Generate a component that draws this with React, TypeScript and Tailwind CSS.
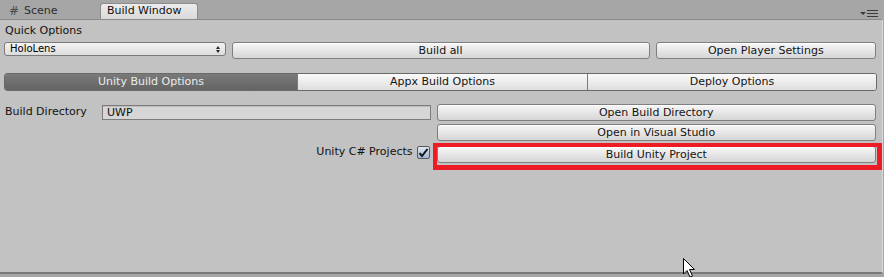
import React from "react";

const font = { fontFamily: '"DejaVu Sans", Verdana, sans-serif' };

function Btn({ label, className = "" }: { label: string; className?: string }) {
  return (
    <div
      className={
        "flex h-[17px] items-center justify-center rounded-[3px] border border-[#7f7f7f] bg-gradient-to-b from-[#f7f7f7] to-[#d6d6d6] text-[11px] leading-none text-[#141414] shadow-[inset_0_1px_0_#ffffff] " +
        className
      }
    >
      {label}
    </div>
  );
}

export default function App() {
  return (
    <div
      className="relative h-[277px] w-[884px] overflow-hidden bg-[#a6a6a6] text-[#111]"
      style={font}
    >
      {/* tab bar */}
      <div className="relative flex h-[19px] items-end pl-[4px]">
        <div className="flex h-[16px] w-[96px] items-center gap-[5px] pl-[5px] text-[11px] text-[#2e2e2e]">
          <span className="text-[12px] leading-none text-[#4a4a4a]">#</span>
          <span>Scene</span>
        </div>
        <div className="flex h-[16px] w-[98px] items-center rounded-t-[3px] border border-b-0 border-[#8c8c8c] bg-gradient-to-b from-[#ececec] to-[#d9d9d9] pl-[6px] text-[11px] text-[#111]">
          Build Window
        </div>
        <div className="absolute right-[6px] top-[10px] flex items-center gap-[1px]">
          <span className="block h-0 w-0 border-x-[3px] border-t-[3px] border-x-transparent border-t-[#3a3a3a]" />
          <div className="flex flex-col gap-[2px]">
            <span className="block h-[1px] w-[11px] bg-[#3a3a3a]" />
            <span className="block h-[1px] w-[11px] bg-[#3a3a3a]" />
            <span className="block h-[1px] w-[11px] bg-[#3a3a3a]" />
          </div>
        </div>
      </div>

      {/* panel */}
      <div className="relative h-[255px] w-[883px] border-t border-r border-b-2 border-[#8a8a8a] border-r-[#d8d8d8] border-b-[#7a7a7a] bg-[#c2c2c2] pl-[4px] pr-[6px]">
        <div className="flex h-[21px] items-center pl-[1px] pt-[1px] text-[11px]">Quick Options</div>
        <div className="mt-[1px] flex items-start gap-[6px]">
          <div className="flex h-[14px] w-[222px] items-center justify-between rounded-[3px] border border-[#7a7a7a] bg-gradient-to-b from-[#f4f4f4] to-[#dcdcdc] pl-[5px] pr-[5px] text-[10px] leading-none text-[#000]">
            <span>HoloLens</span>
            <span className="flex flex-col items-center gap-[1px]">
              <span className="block h-0 w-0 border-x-[2px] border-b-[3px] border-x-transparent border-b-[#222]" />
              <span className="block h-0 w-0 border-x-[2px] border-t-[3px] border-x-transparent border-t-[#222]" />
            </span>
          </div>
          <Btn label="Build all" className="w-[419px]" />
          <Btn label="Open Player Settings" className="w-[221px]" />
        </div>

        {/* toolbar */}
        <div className="mt-[14px] flex h-[18px] w-[873px] overflow-hidden rounded-[3px] border border-[#6a6a6a] text-[11px]">
          <div className="flex w-[292px] items-center justify-center bg-gradient-to-b from-[#7a7a7a] to-[#646464] text-[#ececec]">
            Unity Build Options
          </div>
          <div className="flex w-[290px] items-center justify-center border-l border-[#7a7a7a] bg-gradient-to-b from-[#fafafa] to-[#dedede] text-[#141414]">
            Appx Build Options
          </div>
          <div className="flex flex-1 items-center justify-center border-l border-[#7a7a7a] bg-gradient-to-b from-[#fafafa] to-[#dedede] text-[#141414]">
            Deploy Options
          </div>
        </div>

        {/* build settings */}
        <div className="mt-[13px] flex gap-[6px]">
          <div className="flex w-[427px] flex-col">
            <div className="flex h-[17px] items-center">
              <span className="w-[98px] pl-[1px] text-[11px]">Build Directory</span>
              <div className="flex h-[15px] flex-1 items-center border border-[#7c7c7c] bg-[#d6d6d6] pl-[4px] text-[11px] leading-none shadow-[inset_0_1px_0_#bdbdbd]">
                UWP
              </div>
            </div>
            <div className="mt-[23px] flex h-[17px] items-center justify-end gap-[4px] pr-[1px]">
              <span className="text-[11px]">Unity C# Projects</span>
              <span className="flex h-[13px] w-[13px] items-center justify-center rounded-[2px] border border-[#5a5a5a] bg-gradient-to-b from-[#dfe8f4] to-[#9db5d6]">
                <svg width="11" height="10" viewBox="0 0 11 10">
                  <path d="M1.5 5.2 L4 8 L9.5 1" fill="none" stroke="#111" strokeWidth="2" />
                </svg>
              </span>
            </div>
          </div>
          <div className="flex w-[440px] flex-col">
            <Btn label="Open Build Directory" />
            <Btn label="Open in Visual Studio" className="mt-[3px]" />
            <Btn label="Build Unity Project" className="mt-[5px]" />
          </div>
        </div>

        {/* red annotation box */}
        <div className="pointer-events-none absolute left-[433px] top-[123px] h-[27px] w-[449px] border-[4px] border-b-[5px] border-r-[5px] border-[#ed1c24]" />
      </div>

      {/* mouse cursor */}
      <svg className="absolute left-[683px] top-[258px]" width="14" height="22" viewBox="0 0 14 22">
        <path d="M0.5 0.5 L0.5 16 L4 12.5 L7 19 L9.5 18 L6.5 11.5 L11.5 11.5 Z" fill="#fff" stroke="#000" strokeWidth="1" />
      </svg>
    </div>
  );
}
